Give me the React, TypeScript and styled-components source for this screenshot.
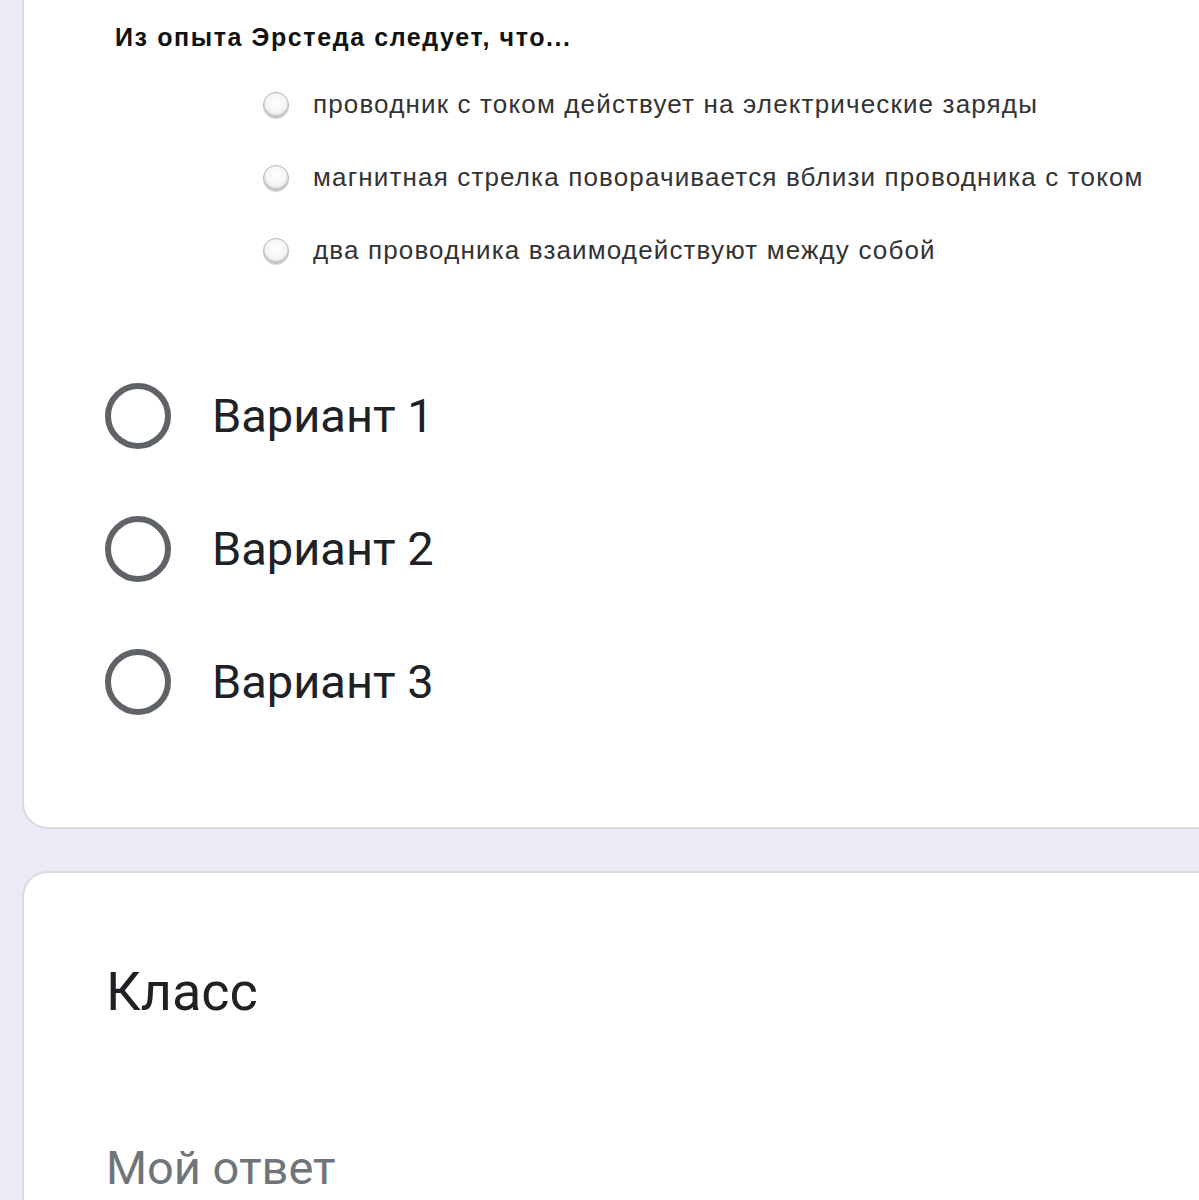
import React from "react";
import styled, { createGlobalStyle } from "styled-components";

const Global = createGlobalStyle`
  html, body { margin: 0; padding: 0; background: #ede9f7; }
  body { width: 1199px; height: 1200px; overflow: hidden; }
  #root { width: 1199px; }
`;

const Page = styled.div`
  display: flex;
  flex-direction: column;
  gap: 42px;
  padding-left: 22px;
  width: 1199px;
  box-sizing: border-box;
  overflow: hidden;
`;

const Card = styled.section<{ $top?: boolean }>`
  background: #fff;
  border: 2px solid #dcdae0;
  border-right: none;
  ${(p) => (p.$top ? "border-top: none;" : "")}
  border-radius: ${(p) => (p.$top ? "0 0 0 26px" : "26px 0 0 0")};
  margin-right: -40px;
  box-sizing: border-box;
`;

const QuestionImage = styled.div`
  padding: 21px 0 0 91px;
  font-family: "Liberation Sans", Arial, sans-serif;
`;

const QuestionTitle = styled.div`
  font-size: 25px;
  font-weight: bold;
  color: #111;
  line-height: 32px;
  letter-spacing: 1.6px;
`;

const SmallList = styled.div`
  display: flex;
  flex-direction: column;
  gap: 44px;
  padding: 37px 0 0 148px;
`;

const SmallOption = styled.div`
  display: flex;
  align-items: center;
  gap: 24px;
  font-size: 26px;
  letter-spacing: 1.15px;
  color: #333;
  line-height: 29px;
  white-space: nowrap;
`;

const SmallRadio = styled.span`
  width: 26px;
  height: 26px;
  flex: none;
  border-radius: 50%;
  box-sizing: border-box;
  border: 1px solid #b5b5b5;
  background: radial-gradient(circle at 50% 40%, #ffffff 0%, #f4f4f4 55%, #dcdcdc 100%);
  box-shadow: inset 0 -2px 2px rgba(0, 0, 0, 0.18), 0 1px 1px rgba(0, 0, 0, 0.15);
`;

const VariantList = styled.div`
  display: flex;
  flex-direction: column;
  gap: 68px;
  padding: 118px 0 113px 81px;
`;

const Variant = styled.div`
  display: flex;
  align-items: center;
  gap: 41px;
  font-family: Roboto, "Noto Sans", sans-serif;
  font-size: 47px;
  color: #202124;
  height: 65px;
`;

const BigRadio = styled.span`
  width: 66px;
  height: 66px;
  flex: none;
  box-sizing: border-box;
  border-radius: 50%;
  border: 6px solid #5f6368;
`;

const Field = styled.div`
  display: flex;
  flex-direction: column;
  padding: 87px 0 0 82px;
  font-family: Roboto, "Noto Sans", sans-serif;
  height: 340px;
  box-sizing: border-box;
`;

const FieldTitle = styled.div`
  font-size: 54px;
  color: #202124;
  line-height: 64px;
`;

const Placeholder = styled.div`
  margin-top: 114px;
  font-size: 47px;
  color: #70757a;
  line-height: 60px;
`;

const smallOptions = [
  "проводник с током действует на электрические заряды",
  "магнитная стрелка поворачивается вблизи проводника с током",
  "два проводника взаимодействуют между собой",
];

export default function App() {
  return (
    <>
      <Global />
      <Page>
        <Card $top>
          <QuestionImage>
            <QuestionTitle>Из опыта Эрстеда следует, что...</QuestionTitle>
            <SmallList>
              {smallOptions.map((t) => (
                <SmallOption key={t}>
                  <SmallRadio />
                  {t}
                </SmallOption>
              ))}
            </SmallList>
          </QuestionImage>
          <VariantList>
            {[1, 2, 3].map((n) => (
              <Variant key={n}>
                <BigRadio />
                Вариант {n}
              </Variant>
            ))}
          </VariantList>
        </Card>
        <Card>
          <Field>
            <FieldTitle>Класс</FieldTitle>
            <Placeholder>Мой ответ</Placeholder>
          </Field>
        </Card>
      </Page>
    </>
  );
}
